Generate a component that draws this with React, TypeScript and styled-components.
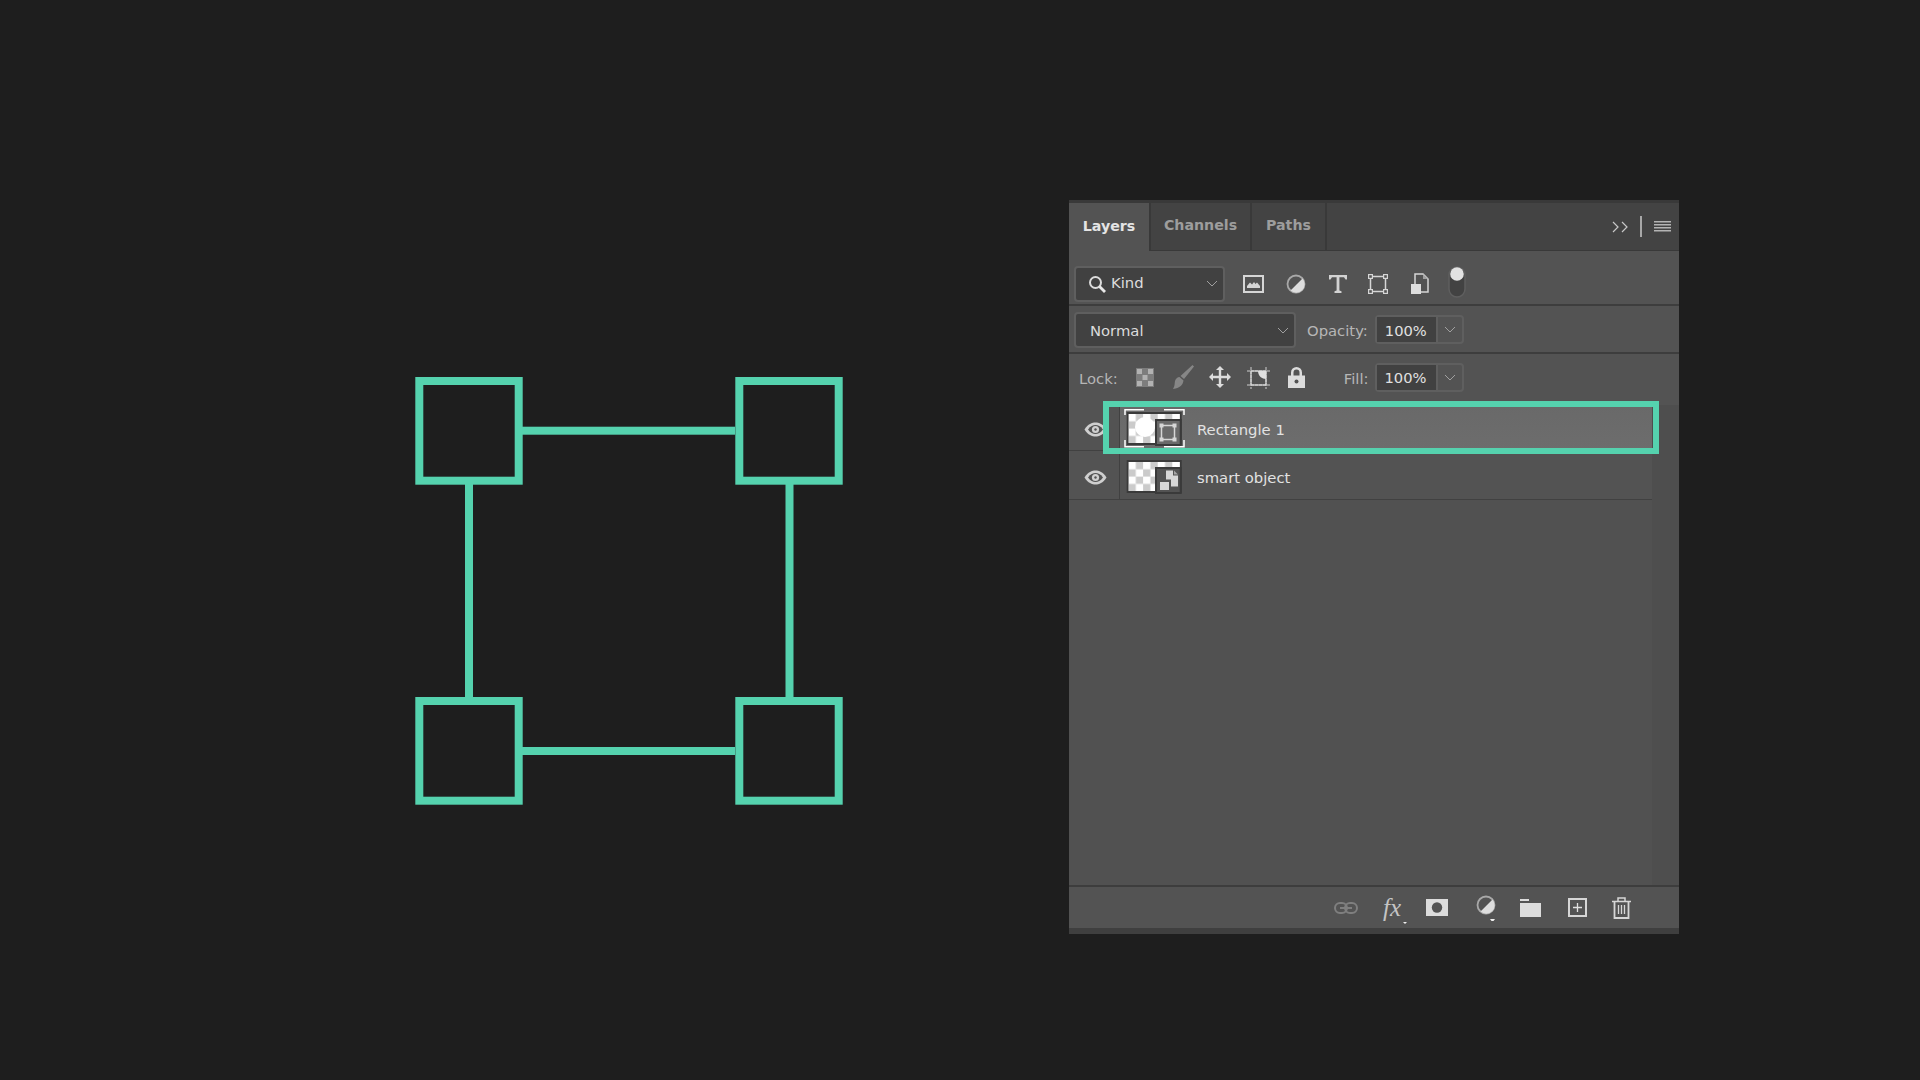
import React from "react";
import styled, { createGlobalStyle } from "styled-components";

const Global = createGlobalStyle`
  html, body { margin: 0; padding: 0; background: #1e1e1e; }
  body { font-family: "DejaVu Sans", "Liberation Sans", sans-serif; }
`;

const Page = styled.div`
  width: 1920px;
  height: 1080px;
  box-sizing: border-box;
  display: flex;
  align-items: flex-start;
  padding: 200px 0 0 415px;
  background: #1e1e1e;
  overflow: hidden;
`;

const Diagram = styled.svg`
  display: block;
  width: 430px;
  height: 430px;
  margin-top: 177px;
  flex: none;
`;

const Panel = styled.section`
  width: 610px;
  height: 734px;
  margin-left: 224px;
  flex: none;
  box-sizing: border-box;
  display: flex;
  flex-direction: column;
  background: #535353;
  border-top: 3px solid #393939;
  border-bottom: 6px solid #3f3f3f;
  color: #d8d8d8;
  font-size: 14.8px;
  line-height: 1;
`;

const TabBar = styled.div`
  height: 48px;
  flex: none;
  box-sizing: border-box;
  display: flex;
  align-items: stretch;
  background: #434343;
  border-bottom: 1px solid #393939;
`;

const Tab = styled.div<{ $active?: boolean; $w: number }>`
  width: ${(p) => p.$w}px;
  box-sizing: border-box;
  margin-bottom: ${(p) => (p.$active ? "-1px" : "0")};
  padding-bottom: 2px;
  display: flex;
  align-items: center;
  justify-content: center;
  font-weight: 700;
  font-size: 14.2px;
  background: ${(p) => (p.$active ? "#535353" : "transparent")};
  color: ${(p) => (p.$active ? "#e4e4e4" : "#9d9d9d")};
  border-right: 2px solid #393939;
`;

const TabSpacer = styled.div`
  flex: 1;
`;

const Row = styled.div<{ $h: number; $pt?: number; $pb?: number; $border?: boolean }>`
  height: ${(p) => p.$h}px;
  flex: none;
  box-sizing: border-box;
  display: flex;
  align-items: center;
  padding: ${(p) => p.$pt ?? 0}px 0 ${(p) => p.$pb ?? 0}px 5px;
  border-bottom: ${(p) => (p.$border ? "2px solid #3d3d3d" : "none")};
`;

const Select = styled.div<{ $w: number; $pl: number; $h: number; $mt?: number }>`
  width: ${(p) => p.$w}px;
  height: ${(p) => p.$h}px;
  margin-top: ${(p) => p.$mt ?? 0}px;
  box-sizing: border-box;
  display: flex;
  align-items: center;
  justify-content: space-between;
  padding: 0 5px 0 ${(p) => p.$pl}px;
  background: #414141;
  border: 2px solid #5f5f5f;
  border-radius: 4px;
  color: #dcdcdc;
  flex: none;
`;

const SelectLabel = styled.span<{ $pt?: number }>`
  display: flex;
  align-items: center;
  gap: 5px;
  padding-top: ${(p) => p.$pt ?? 0}px;
`;

const FieldLabel = styled.span<{ $ml: number }>`
  margin-left: ${(p) => p.$ml}px;
  padding-top: 4px;
  color: #b6b6b6;
  flex: none;
`;

const Combo = styled.div<{ $ml: number }>`
  margin-left: ${(p) => p.$ml}px;
  width: 89px;
  height: 29px;
  flex: none;
  box-sizing: border-box;
  display: grid;
  grid-template-columns: 59px 1fr;
  border: 2px solid #5f5f5f;
  border-radius: 4px;
`;

const ComboValue = styled.div`
  display: flex;
  align-items: center;
  padding: 3px 0 0 8px;
  background: #414141;
  color: #e0e0e0;
  font-size: 14.7px;
`;

const ComboArrow = styled.div`
  display: flex;
  align-items: center;
  justify-content: center;
  border-left: 2px solid #5f5f5f;
`;

const Glyph = styled.svg<{ $ml?: number; $mt?: number }>`
  display: block;
  flex: none;
  margin-left: ${(p) => p.$ml ?? 0}px;
  margin-top: ${(p) => p.$mt ?? 0}px;
`;

const HeaderTools = styled.div`
  display: flex;
  align-items: center;
  padding-right: 8px;
`;

const List = styled.div`
  position: relative;
  flex: 1;
  display: flex;
  background: #4e4e4e;
  min-height: 0;
`;

const ListBody = styled.div`
  width: 583px;
  display: flex;
  flex-direction: column;
  background: #515151;
`;

const LayerRow = styled.div<{ $h: number }>`
  height: ${(p) => p.$h}px;
  flex: none;
  box-sizing: border-box;
  display: flex;
  align-items: stretch;
  border-bottom: 1px solid #414141;
`;

const EyeCell = styled.div`
  width: 51px;
  flex: none;
  box-sizing: border-box;
  display: flex;
  align-items: center;
  padding: 4px 0 0 15px;
  border-right: 1px solid #414141;
  background: #535353;
`;

const LayerBody = styled.div<{ $selected?: boolean }>`
  flex: 1;
  display: flex;
  align-items: center;
  padding-left: 3px;
  background: ${(p) => (p.$selected ? "linear-gradient(#696969, #6d6d6d)" : "#535353")};
`;

const LayerName = styled.span`
  margin-left: 12px;
  padding-top: 6px;
  color: #e2e2e2;
  font-size: 14.8px;
`;

const SelectionFrame = styled.div`
  position: absolute;
  left: 34px;
  top: -4px;
  width: 556px;
  height: 53px;
  box-sizing: border-box;
  border: 6px solid #55d2ae;
  pointer-events: none;
`;

const Footer = styled.div`
  height: 43px;
  flex: none;
  box-sizing: border-box;
  display: flex;
  align-items: center;
  padding: 0 0 0 265px;
  border-top: 2px solid #3d3d3d;
  background: #535353;
`;

const FxLabel = styled.span`
  position: relative;
  width: 24px;
  margin-left: 25px;
  flex: none;
  font-family: "Liberation Serif", serif;
  font-style: italic;
  font-size: 25px;
  color: #c4c4c4;

  &::after {
    content: "";
    position: absolute;
    right: 0;
    bottom: -4px;
    border-style: solid;
    border-width: 2px 2.5px 0;
    border-color: #f0f0f0 transparent transparent;
  }
`;

const Chevron = ({ ml }: { ml?: number }) => (
  <Glyph $ml={ml} width="12" height="7" viewBox="0 0 12 7" fill="none">
    <path d="M1 1l5 5 5-5" stroke="#a0a0a0" strokeWidth="1" />
  </Glyph>
);

const Eye = () => (
  <Glyph width="23" height="15" viewBox="0 0 23 15">
    <path d="M0.5 7.5C4 2 8 0.5 11.5 0.5S19 2 22.5 7.5C19 13 15 14.5 11.5 14.5S4 13 0.5 7.5Z" fill="#cfcfcf" />
    <path d="M4 7.5C6.5 4 9 3 11.5 3s5 1 7.500 4.500C16.500 11 14 12 11.500 12S6.500 11 4 7.500Z" fill="#535353" />
    <circle cx="11.500" cy="7.500" r="3.600" fill="#cfcfcf" />
    <circle cx="11.500" cy="7.500" r="1.200" fill="#535353" />
  </Glyph>
);

const Thumb = ({ selected }: { selected?: boolean }) => {
  const top = selected ? 5 : 6;
  const badgeTop = selected ? 12 : 13;
  const id = selected ? "chk1" : "chk2";
  return (
    <Glyph $mt={selected ? 1 : 0} width="62" height="42" viewBox="0 0 62 42">
      <defs>
        <pattern id={id} x="5.500" y={top + 2} width="14.600" height="14.600" patternUnits="userSpaceOnUse">
          <rect width="14.600" height="14.600" fill="#ffffff" />
          <rect x="7.300" width="7.300" height="7.300" fill="#cbcbcb" />
          <rect y="7.300" width="7.300" height="7.300" fill="#cbcbcb" />
        </pattern>
      </defs>
      <rect x="3.700" y={top} width="55" height="33" fill="#3a3a3a" />
      <rect x="5.500" y={top + 2} width="51.500" height="29" fill={`url(#${id})`} />
      {selected && <circle cx="22" cy="20" r="10" fill="#ffffff" />}
      <rect x="32" y={badgeTop} width="26.700" height="27" fill="#3a3a3a" />
      <rect x="34" y={badgeTop + 2} width="22.700" height="23" fill={selected ? "#6a6a6a" : "#535353"} />
      {selected ? (
        <g fill="none" stroke="#d6d6d6">
          <rect x="38.500" y="18.500" width="13" height="14" strokeWidth="1.500" />
          <g fill="#d6d6d6" stroke="none">
            <rect x="36.500" y="16.500" width="4" height="4" />
            <rect x="49.500" y="16.500" width="4" height="4" />
            <rect x="36.500" y="30.500" width="4" height="4" />
            <rect x="49.500" y="30.500" width="4" height="4" />
          </g>
        </g>
      ) : (
        <g fill="#d8d8d8">
          <path d="M43 16.500h7v5h5v11h-7v-7h-5z" />
          <path d="M51 16.500l4 4h-4z" fill="#a6a6a6" />
          <rect x="37" y="28" width="9" height="8" />
        </g>
      )}
      {selected && (
        <g fill="none" stroke="#ffffff" strokeWidth="1.500">
          <path d="M21 2.750H2V8" />
          <path d="M41 2.750H61V8" />
          <path d="M2 33V39.750H21" />
          <path d="M61 33V39.750H41" />
        </g>
      )}
    </Glyph>
  );
};

const Handle = ({ x, y }: { x: number; y: number }) => (
  <rect x={x + 4.3} y={y + 4} width="99.400" height="99.700" fill="none" stroke="#55d2ae" strokeWidth="8" />
);

export default function App() {
  return (
    <Page>
      <Global />
      <Diagram viewBox="0 0 430 430">
        <g fill="#55d2ae">
          <rect x="104" y="49.700" width="216" height="8" />
          <rect x="104" y="370" width="216" height="8" />
          <rect x="50" y="104" width="8" height="220" />
          <rect x="370.500" y="104" width="8" height="220" />
        </g>
        <Handle x={0} y={0} />
        <Handle x={320} y={0} />
        <Handle x={0} y={320} />
        <Handle x={320} y={320} />
      </Diagram>

      <Panel>
        <TabBar>
          <Tab $active $w={82}>Layers</Tab>
          <Tab $w={101}>Channels</Tab>
          <Tab $w={75}>Paths</Tab>
          <TabSpacer />
          <HeaderTools>
            <Glyph width="17" height="12" viewBox="0 0 17 12" fill="none">
              <path d="M1 1l5 5-5 5M10 1l5 5-5 5" stroke="#c8c8c8" strokeWidth="1.200" />
            </Glyph>
            <Glyph $ml={11} width="2" height="21" viewBox="0 0 2 21">
              <rect width="2" height="21" fill="#a8a8a8" />
            </Glyph>
            <Glyph $ml={12} width="17" height="11" viewBox="0 0 17 11">
              <g fill="#b4b4b4">
                <rect width="17" height="1.500" />
                <rect y="3" width="17" height="1.500" />
                <rect y="6" width="17" height="1.500" />
                <rect y="9" width="17" height="1.500" />
              </g>
            </Glyph>
          </HeaderTools>
        </TabBar>

        <Row $h={55} $pt={12} $border>
          <Select $w={151} $h={36} $pl={12}>
            <SelectLabel>
              <Glyph width="18" height="18" viewBox="0 0 18 18" fill="none">
                <circle cx="7.500" cy="7.500" r="5.500" stroke="#dcdcdc" strokeWidth="2" />
                <path d="M11.500 11.500L17 17" stroke="#e8e8e8" strokeWidth="2.800" />
              </Glyph>
              Kind
            </SelectLabel>
            <Chevron />
          </Select>
          <Glyph $ml={18} width="21" height="18" viewBox="0 0 21 18" fill="none">
            <rect x="1" y="1" width="19" height="16" stroke="#d6d6d6" strokeWidth="2" />
            <path d="M4 13V11L7 7.500 9 9.500 11 7l1.500 2L14 7.500 17 11v2z" fill="#d6d6d6" />
          </Glyph>
          <Glyph $ml={22} width="20" height="20" viewBox="0 0 20 20" fill="none">
            <circle cx="10" cy="10" r="8.500" stroke="#a8a8a8" strokeWidth="1.800" />
            <path d="M16.500 4.500A8.500 8.500 0 0 1 4.500 16.500z" fill="#dedede" />
          </Glyph>
          <Glyph $ml={23} width="18" height="18" viewBox="0 0 18 18">
            <path d="M0 0h18v4.500h-1.500L15 2.200h-4.600V15.500l2.100.8V18h-7v-1.700l2.100-.8V2.200H3L1.500 4.500H0z" fill="#d2d2d2" />
          </Glyph>
          <Glyph $ml={21} width="20" height="20" viewBox="0 0 20 20" fill="none">
            <rect x="2.500" y="2.500" width="15" height="15" stroke="#d6d6d6" strokeWidth="1.500" />
            <g fill="#535353" stroke="#d6d6d6" strokeWidth="1.200">
              <rect x="0.600" y="0.600" width="3.800" height="3.800" />
              <rect x="15.600" y="0.600" width="3.800" height="3.800" />
              <rect x="0.600" y="15.600" width="3.800" height="3.800" />
              <rect x="15.600" y="15.600" width="3.800" height="3.800" />
            </g>
          </Glyph>
          <Glyph $ml={23} width="18" height="21" viewBox="0 0 18 21" fill="none">
            <path d="M4 11V1h8l5 5v13H10" stroke="#d6d6d6" strokeWidth="1.500" />
            <path d="M12 1v5h5z" fill="#a0a0a0" />
            <rect y="11" width="10" height="10" fill="#dedede" />
          </Glyph>
          <Glyph $ml={19} $mt={-4} width="18" height="32" viewBox="0 0 18 32">
            <rect x="1" y="1" width="16" height="30" rx="8" fill="#424242" stroke="#5f5f5f" strokeWidth="1.500" />
            <circle cx="9" cy="8" r="6.800" fill="#e2e2e2" />
          </Glyph>
        </Row>

        <Row $h={48} $pt={1} $border>
          <Select $w={222} $h={36} $pl={14} $mt={1}>
            <SelectLabel $pt={2}>Normal</SelectLabel>
            <Chevron />
          </Select>
          <FieldLabel $ml={11}>Opacity:</FieldLabel>
          <Combo $ml={7}>
            <ComboValue>100%</ComboValue>
            <ComboArrow><Chevron /></ComboArrow>
          </Combo>
        </Row>

        <Row $h={51} $pb={5}>
          <FieldLabel $ml={5}>Lock:</FieldLabel>
          <Glyph $ml={18} width="18" height="19" viewBox="0 0 18 19">
            <rect width="18" height="19" fill="#7d7d7d" />
            <g fill="#b2b2b2">
              <rect x="1" y="1" width="5" height="5" />
              <rect x="12" y="1" width="5" height="5" />
              <rect x="6.500" y="7" width="5" height="5" />
              <rect x="1" y="13" width="5" height="5" />
              <rect x="12" y="13" width="5" height="5" />
            </g>
          </Glyph>
          <Glyph $ml={18} width="22" height="24" viewBox="0 0 22 24">
            <path d="M20.500 0L22 1.500 12 14 8.500 11zM7.500 12l4 3.500C11 19 9 23 1 24c2-3 1.500-6 2-8 .5-2 2.500-4 4.500-4z" fill="#868686" />
          </Glyph>
          <Glyph $ml={15} width="22" height="22" viewBox="0 0 22 22">
            <path d="M11 0l4 4h-2.800v5.800H18V7l4 4-4 4v-2.800h-5.800V18H15l-4 4-4-4h2.800v-5.800H4V15l-4-4 4-4v2.800h5.800V4H7z" fill="#dcdcdc" />
          </Glyph>
          <Glyph $ml={16} width="23" height="23" viewBox="0 0 23 23" fill="none">
            <path d="M0 5h23M0 19h23M4 1v22M19 1v22" stroke="#cfcfcf" strokeWidth="1" strokeDasharray="3 1" />
            <rect x="4" y="5" width="15" height="14" stroke="#d6d6d6" strokeWidth="1.300" />
            <path d="M11 5h8v8c-4 0-8-3-8-8z" fill="#e0e0e0" />
          </Glyph>
          <Glyph $ml={18} width="17" height="21" viewBox="0 0 17 21">
            <path d="M3 9V5.500a5.500 5.500 0 0 1 11 0V9h-2.500V5.500a3 3 0 0 0-6 0V9z" fill="#dcdcdc" />
            <path d="M0 8.500h17V21H0z" fill="#dcdcdc" />
            <circle cx="8.500" cy="14.500" r="2" fill="#535353" />
          </Glyph>
          <FieldLabel $ml={39}>Fill:</FieldLabel>
          <Combo $ml={6}>
            <ComboValue>100%</ComboValue>
            <ComboArrow><Chevron /></ComboArrow>
          </Combo>
        </Row>

        <List>
          <ListBody>
            <LayerRow $h={46}>
              <EyeCell><Eye /></EyeCell>
              <LayerBody $selected>
                <Thumb selected />
                <LayerName>Rectangle 1</LayerName>
              </LayerBody>
            </LayerRow>
            <LayerRow $h={49}>
              <EyeCell><Eye /></EyeCell>
              <LayerBody>
                <Thumb />
                <LayerName>smart object</LayerName>
              </LayerBody>
            </LayerRow>
          </ListBody>
          <SelectionFrame />
        </List>

        <Footer>
          <Glyph width="24" height="12" viewBox="0 0 24 12" fill="none">
            <rect x="1" y="1" width="12" height="10" rx="5" stroke="#7f7f7f" strokeWidth="2" />
            <rect x="11" y="1" width="12" height="10" rx="5" stroke="#7f7f7f" strokeWidth="2" />
            <path d="M6 6h12" stroke="#7f7f7f" strokeWidth="2" />
          </Glyph>
          <FxLabel>fx</FxLabel>
          <Glyph $ml={19} width="22" height="17" viewBox="0 0 22 17">
            <rect width="22" height="17" fill="#dcdcdc" />
            <circle cx="11" cy="8.500" r="5.200" fill="#535353" />
          </Glyph>
          <Glyph $ml={28} width="24" height="26" viewBox="0 0 24 26" fill="none">
            <circle cx="10" cy="10" r="8.500" stroke="#a8a8a8" strokeWidth="1.800" />
            <path d="M16.500 4.500A8.500 8.500 0 0 1 4.500 16.500z" fill="#dedede" />
            <path d="M14 24h5l-1.500 2h-2z" fill="#f0f0f0" />
          </Glyph>
          <Glyph $ml={20} width="21" height="18" viewBox="0 0 21 18">
            <path d="M0 0h9v2H0zM0 4h21v14H0z" fill="#dcdcdc" />
          </Glyph>
          <Glyph $ml={27} width="19" height="19" viewBox="0 0 19 19" fill="none">
            <rect x="1" y="1" width="17" height="17" stroke="#d6d6d6" strokeWidth="2" />
            <path d="M9.500 5v9M5 9.500h9" stroke="#e0e0e0" strokeWidth="1.300" />
          </Glyph>
          <Glyph $ml={25} width="19" height="22" viewBox="0 0 19 22" fill="none">
            <path d="M0 4.500h19M6 4V1h7v3" stroke="#d6d6d6" strokeWidth="1.500" />
            <path d="M2.500 4.500V21h14V4.500" stroke="#d6d6d6" strokeWidth="1.800" />
            <path d="M6.500 8v9M9.500 8v9M12.500 8v9" stroke="#d6d6d6" strokeWidth="1.300" />
          </Glyph>
        </Footer>
      </Panel>
    </Page>
  );
}
